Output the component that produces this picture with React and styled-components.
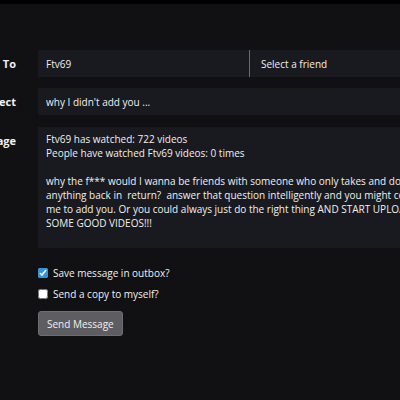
import React from 'react';
import styled, { createGlobalStyle } from 'styled-components';

const Global = createGlobalStyle`
  html, body {
    margin: 0;
    padding: 0;
    background: #111013;
    overflow: hidden;
  }
  body {
    font-family: "Open Sans", "Noto Sans", sans-serif;
    color: #f0f0f0;
  }
`;

const Page = styled.div`
  width: 400px;
  height: 400px;
  border-top: 4px solid #000;
  box-sizing: border-box;
  overflow: hidden;
`;

const Form = styled.form`
  display: grid;
  grid-template-columns: 16px 440px;
  column-gap: 22px;
  padding-top: 46px;
`;

const Label = styled.label`
  display: flex;
  justify-content: flex-end;
  align-items: ${p => (p.$top ? 'flex-start' : 'center')};
  padding-top: ${p => (p.$top ? '6px' : '0')};
  font-size: 11px;
  font-weight: 700;
  white-space: nowrap;
  margin-bottom: ${p => p.$gap || 0}px;
`;

const Field = styled.div`
  display: flex;
  height: ${p => p.$h || 27}px;
  background: #191a1f;
  margin-bottom: ${p => p.$gap || 0}px;
`;

const TextInput = styled.input`
  width: ${p => p.$w || '100%'};
  box-sizing: border-box;
  border: 0;
  background: transparent;
  color: #f0f0f0;
  font: inherit;
  font-size: 10px;
  padding: 0 8px;
  outline: none;
`;

const Divider = styled.span`
  width: 1px;
  background: #6a6a6e;
`;

const FriendSelect = styled.div`
  flex: 1;
  display: flex;
  align-items: center;
  padding-left: 11px;
  font-size: 10px;
`;

const MessageBox = styled.textarea`
  width: 100%;
  height: 100%;
  box-sizing: border-box;
  border: 0;
  resize: none;
  background: transparent;
  color: #f0f0f0;
  font: inherit;
  font-size: 10px;
  line-height: 14px;
  padding: 5px 8px;
  overflow: hidden;
  outline: none;
`;

const Options = styled.div`
  grid-column: 2;
  display: flex;
  flex-direction: column;
  gap: 8px;
  padding-top: 18px;
`;

const Check = styled.label`
  display: flex;
  align-items: center;
  gap: 5px;
  font-size: 10px;
  height: 13px;

  input {
    margin: 0;
    width: 10px;
    height: 10px;
    accent-color: #2f95e0;
  }
`;

const SendButton = styled.button`
  align-self: flex-start;
  margin-top: 3px;
  height: 25px;
  padding: 0 8px;
  background: #5e5d62;
  border: 1px solid #6f6e73;
  border-radius: 3px;
  color: #f0f0f0;
  font: inherit;
  font-size: 10px;
`;

const message = `Ftv69 has watched: 722 videos
People have watched Ftv69 videos: 0 times

why the f*** would I wanna be friends with someone who only takes and doesn't give
anything back in  return?  answer that question intelligently and you might convince
me to add you. Or you could always just do the right thing AND START UPLOADING
SOME GOOD VIDEOS!!!`;

export default function App() {
  return (
    <Page>
      <Global />
      <Form>
        <Label $gap={11}>To</Label>
        <Field $gap={11}>
          <TextInput $w="211px" defaultValue="Ftv69" readOnly />
          <Divider />
          <FriendSelect>Select a friend</FriendSelect>
        </Field>

        <Label $gap={12}>Subject</Label>
        <Field $gap={12}>
          <TextInput defaultValue="why I didn't add you ..." readOnly />
        </Field>

        <Label $top>Message</Label>
        <Field $h={121}>
          <MessageBox wrap="off" defaultValue={message} readOnly />
        </Field>

        <Options>
          <Check>
            <input type="checkbox" defaultChecked />
            Save message in outbox?
          </Check>
          <Check>
            <input type="checkbox" />
            Send a copy to myself?
          </Check>
          <SendButton type="button">Send Message</SendButton>
        </Options>
      </Form>
    </Page>
  );
}
